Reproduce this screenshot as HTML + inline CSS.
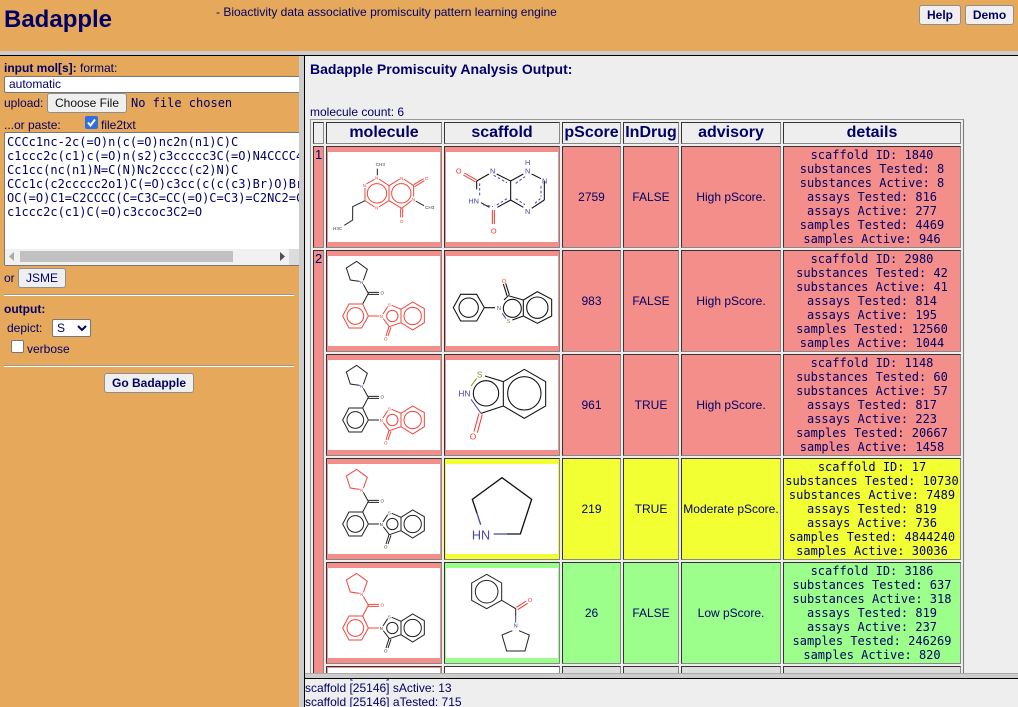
<!DOCTYPE html>
<html><head><meta charset="utf-8"><title>Badapple</title>
<style>
html,body{margin:0;padding:0;width:1018px;height:707px;overflow:hidden;background:#eee}
body{font:12px/14px "Liberation Sans",sans-serif;color:#000066;position:relative}
.a{position:absolute;white-space:pre}
.m{font-family:"DejaVu Sans Mono","Liberation Mono",monospace}
.b{font-weight:bold}
.btn{position:absolute;box-sizing:border-box;background:#efefef;border:1px solid #8f8f8f;border-radius:3px;text-align:center;line-height:18px;color:#000066}
.c{position:absolute;box-sizing:border-box;border:1px solid;border-color:#333 #888 #888 #333;text-align:center}
.h{top:122px;height:22px;font:bold 16px/20px "Liberation Sans",sans-serif;background:#eee}
.p{background:#f48e8a}.y{background:#f1ff33}.g{background:#9cff8c}
.w{position:absolute;background:#fff}
.v{display:flex;align-items:center;justify-content:center}
.d{font:12px/14px "DejaVu Sans Mono","Liberation Mono",monospace;padding-top:1px;white-space:pre}
svg text{font-family:"Liberation Sans",sans-serif;text-anchor:middle;stroke:none}
.k{stroke:#222;fill:none;stroke-width:3}
.r{stroke:#f2453d;fill:none;stroke-width:3}
.s{stroke:#111;fill:none;stroke-width:3.2}
.bl{stroke:#4646aa;fill:none;stroke-width:3}
.re{stroke:#f2352d;fill:none;stroke-width:3}
.t1{font-size:14px}
.t2{font-size:22px}
</style></head><body>

<!-- right pane base -->
<div class="a" style="left:310px;top:60px;font:bold 14px/18px 'Liberation Sans',sans-serif">Badapple Promiscuity Analysis Output:</div>
<div class="a" style="left:310px;top:105px">molecule count: 6</div>
<div class="a" style="left:310px;top:119px;width:654px;height:560px;box-sizing:border-box;border:1px solid #999;border-right-color:#777;background:#eee"></div>

<!-- headers -->
<div class="c h" style="left:313px;width:11px"></div>
<div class="c h" style="left:326px;width:116px">molecule</div>
<div class="c h" style="left:444px;width:116px">scaffold</div>
<div class="c h" style="left:562px;width:59px">pScore</div>
<div class="c h" style="left:623px;width:56px">InDrug</div>
<div class="c h" style="left:681px;width:100px">advisory</div>
<div class="c h" style="left:783px;width:178px">details</div>

<!-- index col -->
<div class="c p" style="left:313px;top:146px;width:11px;height:102px;font-size:13px;line-height:16px;text-align:left;padding-left:1px">1</div>
<div class="c p" style="left:313px;top:250px;width:11px;height:430px;font-size:13px;line-height:16px;text-align:left;padding-left:1px">2</div>

<!-- row 1 -->
<div class="c p" style="left:326px;top:146px;width:116px;height:102px"></div><div class="w" style="left:328px;top:152px;width:112px;height:90px"></div>
<div class="c p" style="left:444px;top:146px;width:116px;height:102px"></div><div class="w" style="left:446px;top:152px;width:112px;height:90px"></div>
<div class="c p v" style="left:562px;top:146px;width:59px;height:102px">2759</div>
<div class="c p v" style="left:623px;top:146px;width:56px;height:102px">FALSE</div>
<div class="c p v" style="left:681px;top:146px;width:100px;height:102px">High pScore.</div>
<div class="c p d" style="left:783px;top:146px;width:178px;height:102px">scaffold ID: 1840
substances Tested: 8
substances Active: 8
assays Tested: 816
assays Active: 277
samples Tested: 4469
samples Active: 946</div>

<!-- row 2 -->
<div class="c p" style="left:326px;top:250px;width:116px;height:102px"></div><div class="w" style="left:328px;top:256px;width:112px;height:90px"></div>
<div class="c p" style="left:444px;top:250px;width:116px;height:102px"></div><div class="w" style="left:446px;top:256px;width:112px;height:90px"></div>
<div class="c p v" style="left:562px;top:250px;width:59px;height:102px">983</div>
<div class="c p v" style="left:623px;top:250px;width:56px;height:102px">FALSE</div>
<div class="c p v" style="left:681px;top:250px;width:100px;height:102px">High pScore.</div>
<div class="c p d" style="left:783px;top:250px;width:178px;height:102px">scaffold ID: 2980
substances Tested: 42
substances Active: 41
assays Tested: 814
assays Active: 195
samples Tested: 12560
samples Active: 1044</div>

<!-- row 3 -->
<div class="c p" style="left:326px;top:354px;width:116px;height:102px"></div><div class="w" style="left:328px;top:360px;width:112px;height:90px"></div>
<div class="c p" style="left:444px;top:354px;width:116px;height:102px"></div><div class="w" style="left:446px;top:360px;width:112px;height:90px"></div>
<div class="c p v" style="left:562px;top:354px;width:59px;height:102px">961</div>
<div class="c p v" style="left:623px;top:354px;width:56px;height:102px">TRUE</div>
<div class="c p v" style="left:681px;top:354px;width:100px;height:102px">High pScore.</div>
<div class="c p d" style="left:783px;top:354px;width:178px;height:102px">scaffold ID: 1148
substances Tested: 60
substances Active: 57
assays Tested: 817
assays Active: 223
samples Tested: 20667
samples Active: 1458</div>

<!-- row 4 -->
<div class="c p" style="left:326px;top:458px;width:116px;height:102px"></div><div class="w" style="left:328px;top:464px;width:112px;height:90px"></div>
<div class="c y" style="left:444px;top:458px;width:116px;height:102px"></div><div class="w" style="left:446px;top:464px;width:112px;height:90px"></div>
<div class="c y v" style="left:562px;top:458px;width:59px;height:102px">219</div>
<div class="c y v" style="left:623px;top:458px;width:56px;height:102px">TRUE</div>
<div class="c y v" style="left:681px;top:458px;width:100px;height:102px">Moderate pScore.</div>
<div class="c y d" style="left:783px;top:458px;width:178px;height:102px">scaffold ID: 17
substances Tested: 10730
substances Active: 7489
assays Tested: 819
assays Active: 736
samples Tested: 4844240
samples Active: 30036</div>

<!-- row 5 -->
<div class="c p" style="left:326px;top:562px;width:116px;height:102px"></div><div class="w" style="left:328px;top:568px;width:112px;height:90px"></div>
<div class="c g" style="left:444px;top:562px;width:116px;height:102px"></div><div class="w" style="left:446px;top:568px;width:112px;height:90px"></div>
<div class="c g v" style="left:562px;top:562px;width:59px;height:102px">26</div>
<div class="c g v" style="left:623px;top:562px;width:56px;height:102px">FALSE</div>
<div class="c g v" style="left:681px;top:562px;width:100px;height:102px">Low pScore.</div>
<div class="c g d" style="left:783px;top:562px;width:178px;height:102px">scaffold ID: 3186
substances Tested: 637
substances Active: 318
assays Tested: 819
assays Active: 237
samples Tested: 246269
samples Active: 820</div>

<!-- row 6 -->
<div class="c p" style="left:326px;top:666px;width:116px;height:30px"></div><div class="w" style="left:328px;top:668px;width:112px;height:20px"></div>
<div class="c" style="left:444px;top:666px;width:116px;height:30px;background:#fff"></div>
<div class="c" style="left:562px;top:666px;width:59px;height:30px;background:#ddd"></div>
<div class="c" style="left:623px;top:666px;width:56px;height:30px;background:#ddd"></div>
<div class="c" style="left:681px;top:666px;width:100px;height:30px;background:#ddd"></div>
<div class="c" style="left:783px;top:666px;width:178px;height:30px;background:#ddd"></div>

<!-- molecule drawings -->
<svg class="a" style="left:0;top:0" width="1018" height="707" viewBox="0 0 1018 707">
<defs>
<g id="pyr"><path d="M164 544L136 540L124 504L155 484L187 508L175 541"/></g>
<g id="car"><path d="M175 553L190 580L173 612M190 577H222M190 583H222"/></g>
<g id="ben"><path d="M173 612L190 648L170 684H132L113 648L132 612Z"/><circle cx="151" cy="648" r="25"/><path d="M190 648H222"/></g>
<g id="iso"><path d="M234 642L248 620M260 616L288 628V668L253 680L235 656M288 628L323 606L358 626V668L323 690L288 668M252 680L243 708M258 682L249 708"/><circle cx="323" cy="648" r="26"/><circle cx="262" cy="648" r="17"/></g>
</defs>
<g transform="translate(305 100) scale(.33333)">
 <!-- row1 molecule -->
 <g class="r"><path d="M222 237L252 257V302L221 321M209 321L180 302V264M184 252L209 238"/><path d="M296 237L326 257V290M320 302L290 325L252 302V257L284 237"/><circle cx="216" cy="280" r="29"/><circle cx="289" cy="280" r="29"/><path d="M326 254L356 236M329 260L358 242M287 325V352M293 325V352"/></g>
 <path class="k" d="M217 206V226M332 303L357 317M180 302L143 320V360L118 376"/>
 <g fill="#f2453d"><text class="t1" x="215" y="239">N</text><text class="t1" x="178" y="261">N</text><text class="t1" x="215" y="329">N</text><text class="t1" x="290" y="240">N</text><text class="t1" x="325" y="303">N</text><text class="t1" x="365" y="240">O</text><text class="t1" x="290" y="369">O</text></g>
 <g fill="#333"><text class="t1" x="226" y="198">CH3</text><text class="t1" x="374" y="327">CH3</text><text class="t1" x="98" y="390">H3C</text></g>
 <!-- row1 scaffold -->
 <path class="s" d="M515 243V268M515 243L552 222M575 222L617 243V300L577 322M553 322L528 308M617 243L655 222M617 300L655 322M680 325L718 300M718 243V300M680 222L708 236"/>
 <path class="bl" stroke-dasharray="8 6" d="M524 250V290M534 314L564 320M566 226L606 248M606 296L570 318M632 296L660 314M632 250L660 230M708 258V290M690 310L708 294"/>
 <path class="re" d="M515 240L478 219M512 246L475 225M562 330V372M568 330V372"/>
 <g fill="#4646aa"><text class="t2" x="563" y="221">N</text><text class="t2" x="668" y="195">H</text><text class="t2" x="668" y="221">N</text><text class="t2" x="719" y="251">N</text><text class="t2" x="668" y="342">N</text><text class="t2" x="506" y="311">HN</text></g>
 <g fill="#f2352d"><text class="t2" x="461" y="221">O</text><text class="t2" x="566" y="401">O</text></g>

 <!-- row2 molecule -->
 <use href="#pyr" class="k"/><use href="#car" class="k"/><use href="#ben" class="r"/><use href="#iso" class="r"/>
 <text class="t1" fill="#4646aa" x="170" y="552">N</text><text class="t1" fill="#444" x="232" y="584">O</text>
 <text class="t1" fill="#f2453d" x="229" y="654">N</text><text class="t1" fill="#f2453d" x="253" y="619">S</text><text class="t1" fill="#f2453d" x="242" y="722">O</text>
 <!-- row2 scaffold -->
 <path class="s" d="M467 583H515L538 623L515 663H467L445 623ZM538 623H570M597 600L610 587L655 600V648L622 660M655 600L697 575L740 598V648L697 670L655 648M606 587L595 552M613 585L602 550"/>
 <circle class="s" cx="491" cy="623" r="29"/><circle class="s" cx="697" cy="623" r="32"/><circle class="s" cx="622" cy="625" r="27"/>
 <path d="M592 640L603 656" stroke="#4646aa" stroke-width="3"/>
 <text class="t2" style="font-size:17px" fill="#4646aa" x="582" y="630">N</text><text class="t2" style="font-size:17px" fill="#8a8a30" x="610" y="669">S</text><text class="t2" style="font-size:17px" fill="#f2352d" x="597" y="549">O</text>

 <!-- row3 molecule -->
 <g transform="translate(0 312)">
 <use href="#pyr" class="k"/><use href="#car" class="k"/><use href="#ben" class="k"/><use href="#iso" class="r"/>
 <text class="t1" fill="#4646aa" x="170" y="552">N</text><text class="t1" fill="#444" x="232" y="584">O</text>
 <text class="t1" fill="#f2453d" x="229" y="654">N</text><text class="t1" fill="#f2453d" x="253" y="619">S</text><text class="t1" fill="#f2453d" x="242" y="722">O</text>
 </g>
 <!-- row4 molecule -->
 <g transform="translate(0 624)">
 <use href="#pyr" class="r"/><use href="#car" class="k"/><use href="#ben" class="k"/><use href="#iso" class="k"/>
 <text class="t1" fill="#f2453d" x="170" y="552">N</text><text class="t1" fill="#444" x="232" y="584">O</text>
 <text class="t1" fill="#333" x="229" y="654">N</text><text class="t1" fill="#555" x="253" y="619">S</text><text class="t1" fill="#444" x="242" y="722">O</text>
 </g>
 <!-- row5 molecule -->
 <g transform="translate(0 936)">
 <use href="#pyr" class="r"/><use href="#car" class="r"/><use href="#ben" class="r"/><use href="#iso" class="k"/>
 <text class="t1" fill="#f2453d" x="170" y="552">N</text><text class="t1" fill="#f2453d" x="232" y="584">O</text>
 <text class="t1" fill="#333" x="229" y="654">N</text><text class="t1" fill="#555" x="253" y="619">S</text><text class="t1" fill="#444" x="242" y="722">O</text>
 </g>
</g>
<g transform="translate(305 350) scale(.33333)">
 <!-- row3 scaffold -->
 <path class="s" d="M595 95L658 58L722 95V168L658 205L595 168ZM595 168L528 190M540 78L595 95"/>
 <circle class="s" cx="658" cy="130" r="50"/><circle class="s" cx="543" cy="130" r="38"/>
 <path stroke="#8a8a30" stroke-width="3" d="M515 85L498 108"/>
 <path stroke="#4646aa" stroke-width="3" d="M498 148L528 190"/>
 <path class="re" d="M522 190L507 245M532 193L517 248"/>
 <text class="t2" style="font-size:25px" fill="#8a8a30" x="524" y="83">S</text>
 <text class="t2" style="font-size:25px" fill="#4646aa" x="478" y="139">HN</text>
 <text class="t2" style="font-size:25px" fill="#f2352d" x="504" y="269">O</text>
 <!-- row4 scaffold -->
 <path class="s" style="stroke-width:4" d="M516 490L502 448L591 383L680 448L646 552H605"/>
 <path class="bl" style="stroke-width:4" d="M516 490L527 524M605 552H566"/>
 <text style="font-size:38px" fill="#4646aa" x="528" y="569">HN</text>
 <!-- row5 scaffold -->
 <path class="k" d="M545 673L590 699V751L545 776L500 751V699ZM590 751L632 776V800"/>
 <circle class="k" cx="545" cy="725" r="34"/>
 <path class="re" d="M634 772L664 753M638 779L668 760"/>
 <path class="k" d="M642 842L673 855L660 903H605L591 855L622 842"/>
 <path stroke="#4646aa" stroke-width="3" d="M632 800V818"/>
 <text class="t2" style="font-size:17px" fill="#f2352d" x="675" y="756">O</text>
 <text class="t2" style="font-size:17px" fill="#4646aa" x="632" y="833">N</text>
</g>
</svg>

<!-- bottom pane -->
<div class="a" style="left:305px;top:673px;width:713px;height:34px;background:#eee;overflow:hidden">
 <div class="a" style="left:0;top:-6px">scaffold [25146] sTested: 13</div>
 <div class="a" style="left:0;top:0;width:713px;height:5px;background:#ccc;border-top:1px solid #aaa;box-sizing:border-box"></div>
 <div class="a" style="left:0;top:5px;width:713px;height:1px;background:#000"></div>
 <div class="a" style="left:0;top:8px">scaffold [25146] sActive: 13</div>
 <div class="a" style="left:0;top:22px">scaffold [25146] aTested: 715</div>
</div>

<!-- header -->
<div class="a" style="left:0;top:0;width:1018px;height:51px;background:#e6a95c"></div>
<div class="a" style="left:0;top:51px;width:1018px;height:4px;background:#ccc"></div>
<div class="a" style="left:0;top:55px;width:1018px;height:1px;background:#000"></div>
<div class="a b" style="left:4px;top:6px;font-size:24px;line-height:28px">Badapple</div>
<div class="a" style="left:216px;top:5px">- Bioactivity data associative promiscuity pattern learning engine</div>
<div class="btn b" style="left:919px;top:5px;width:42px;height:20px">Help</div>
<div class="btn b" style="left:965px;top:5px;width:49px;height:20px">Demo</div>

<!-- left pane -->
<div class="a" style="left:0;top:56px;width:299px;height:651px;background:#e6a95c;overflow:hidden">
 <div class="a" style="left:4px;top:5px"><b>input mol[s]:</b> format:</div>
 <div class="a" style="left:4px;top:20px;width:310px;height:17px;box-sizing:border-box;background:#fff;border:1px solid #777;border-radius:2px;padding-left:4px;line-height:15px">automatic</div>
 <div class="a" style="left:4px;top:40px">upload:</div>
 <div class="btn" style="left:47px;top:37px;width:80px;height:20px;color:#111">Choose File</div>
 <div class="a m" style="left:131px;top:40px">No file chosen</div>
 <div class="a" style="left:4px;top:62px">...or paste:</div>
 <svg class="a" style="left:85px;top:60px" width="13" height="13" viewBox="0 0 13 13"><rect width="13" height="13" rx="2" fill="#2f6fe0"/><path d="M3 6.5L5.5 9.5L10 3.5" stroke="#fff" stroke-width="2" fill="none"/></svg>
 <div class="a" style="left:101px;top:62px">file2txt</div>
 <div class="a" style="left:4px;top:76px;width:310px;height:134px;box-sizing:border-box;background:#fff;border:1px solid #777;border-radius:2px"></div>
 <div class="a m" style="left:7px;top:79px;width:293px;overflow:hidden">CCCc1nc-2c(=O)n(c(=O)nc2n(n1)C)C
c1ccc2c(c1)c(=O)n(s2)c3ccccc3C(=O)N4CCCC4
Cc1cc(nc(n1)N=C(N)Nc2cccc(c2)N)C
CCc1c(c2ccccc2o1)C(=O)c3cc(c(c(c3)Br)O)Br
OC(=O)C1=C2CCCC(C=C3C=CC(=O)C=C3)=C2NC2=C
c1ccc2c(c1)C(=O)c3ccoc3C2=O</div>
 <div class="a" style="left:5px;top:193px;width:295px;height:16px;background:#f1f1f1"></div>
 <div class="a" style="left:20px;top:195px;width:213px;height:11px;background:#c1c1c1"></div>
 <div class="a" style="left:289px;top:193px;width:11px;height:16px;background:#dcdcdc"></div>
 <svg class="a" style="left:8px;top:196px" width="8" height="9"><path d="M6 0V9L1 4.5Z" fill="#aaa"/></svg>
 <svg class="a" style="left:279px;top:196px" width="8" height="9"><path d="M1 0V9L6 4.5Z" fill="#505050"/></svg>
 <div class="a" style="left:4px;top:215px">or</div>
 <div class="btn" style="left:18px;top:212px;width:48px;height:20px">JSME</div>
 <div class="a" style="left:4px;top:238px;width:290px;height:1px;background:#999"></div>
 <div class="a" style="left:4px;top:239px;width:290px;height:1px;background:#fff"></div>
 <div class="a b" style="left:4px;top:246px">output:</div>
 <div class="a" style="left:7px;top:265px">depict:</div>
 <div class="a" style="left:52px;top:263px;width:39px;height:18px;box-sizing:border-box;background:#fff;border:1px solid #777;border-radius:2px;padding-left:4px;line-height:16px">S</div>
 <svg class="a" style="left:77px;top:269px" width="10" height="7"><path d="M1 1L5 5L9 1" stroke="#000066" stroke-width="2" fill="none"/></svg>
 <div class="a" style="left:11px;top:284px;width:13px;height:13px;box-sizing:border-box;background:#fff;border:1px solid #777;border-radius:2px"></div>
 <div class="a" style="left:27px;top:286px">verbose</div>
 <div class="a" style="left:4px;top:309px;width:290px;height:1px;background:#999"></div>
 <div class="a" style="left:4px;top:310px;width:290px;height:1px;background:#fff"></div>
 <div class="btn b" style="left:104px;top:317px;width:90px;height:20px">Go Badapple</div>
</div>
<!-- splitter -->
<div class="a" style="left:299px;top:56px;width:5px;height:651px;background:#ccc"></div>
<div class="a" style="left:304px;top:56px;width:1px;height:651px;background:#000"></div>
</body></html>
